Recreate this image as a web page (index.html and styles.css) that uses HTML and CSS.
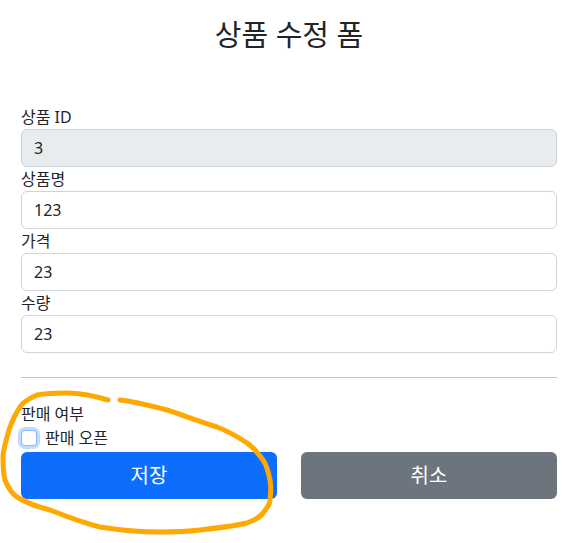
FILE: index.html
```html
<!DOCTYPE html>
<html lang="ko">
<head>
    <meta charset="UTF-8">
    <meta name="viewport" content="width=device-width, initial-scale=1.0">
    <title>상품 수정 폼</title>
    <link rel="stylesheet" href="styles.css">
</head>
<body>
    <div class="container">
        <div class="page-header">
            <h2>상품 수정 폼</h2>
        </div>

        <form class="item-form">
            <div class="field">
                <label for="id">상품 ID</label>
                <input type="text" id="id" class="input" value="3" readonly>
            </div>
            <div class="field">
                <label for="itemName">상품명</label>
                <input type="text" id="itemName" class="input" value="123">
            </div>
            <div class="field">
                <label for="price">가격</label>
                <input type="text" id="price" class="input" value="23">
            </div>
            <div class="field">
                <label for="quantity">수량</label>
                <input type="text" id="quantity" class="input" value="23">
            </div>

            <hr class="divider">

            <!-- 판매 여부 -->
            <div class="field">
                <div class="field-title">판매 여부</div>
                <div class="check">
                    <input type="checkbox" id="open" class="check-box">
                    <label for="open">판매 오픈</label>
                </div>
            </div>

            <div class="actions">
                <button type="submit" class="btn btn-primary">저장</button>
                <button type="button" class="btn btn-secondary">취소</button>
            </div>
        </form>
    </div>

    <!-- annotation drawn over the page -->
    <svg class="scribble" width="567" height="543" viewBox="0 0 567 543">
        <path d="M108 400 C 95 396, 80 393, 67 393 C 50 393, 42 394, 37 395 C 28 399, 22 403, 20 407 C 14 416, 11 424, 10 427 C 6 440, 3 450, 3 457 C 3 468, 4 476, 5 480 C 9 490, 14 495, 17 497 C 30 505, 42 508, 50 510 C 70 518, 88 524, 100 527 C 125 531, 145 532, 160 532 C 180 532, 192 531, 200 530 C 225 527, 240 525, 247 523 C 258 519, 261 516, 263 513 C 268 507, 270 503, 270 500 C 271 492, 271 485, 270 480 C 268 470, 266 464, 263 460 C 257 452, 252 446, 247 443 C 235 435, 225 430, 217 427 C 195 420, 180 414, 167 410 C 148 405, 132 401, 120 400"
              fill="none" stroke="#ffa800" stroke-width="5" stroke-linecap="round"/>
    </svg>
</body>
</html>
```

FILE: styles.css
```css
body {
    margin: 0;
    font-family: "Noto Sans", "Noto Sans CJK KR", sans-serif;
    font-size: 16px;
    line-height: 1.5;
    color: #212529;
    background-color: #fff;
}
.container {
    width: 536px;
    margin-left: 21px;
}
.page-header {
    padding: 17px 0 52px;
    text-align: center;
}
.page-header h2 {
    margin: 0;
    font-size: 29px;
    font-weight: 400;
    line-height: 36px;
}
.field label,
.field-title {
    display: block;
}
.input {
    display: block;
    box-sizing: border-box;
    width: 100%;
    height: 38px;
    padding: 6px 12px;
    font-family: inherit;
    font-size: 16px;
    line-height: 1.5;
    color: #212529;
    background-color: #fff;
    border: 1px solid #ced4da;
    border-radius: 6px;
}
.input[readonly] {
    background-color: #e9ecef;
}
.divider {
    margin: 24px 0;
    border: 0;
    border-top: 1px solid #c4c4c4;
}
.check {
    display: flex;
    align-items: center;
    gap: 8px;
    height: 24px;
    margin-bottom: 2px;
}
.check label {
    display: inline;
}
.check-box {
    appearance: none;
    width: 16px;
    height: 16px;
    margin: 0;
    border: 1px solid #86b7fe;
    border-radius: 4px;
    background-color: #fff;
    box-shadow: 0 0 0 3px rgba(13, 110, 253, 0.25);
}
.actions {
    display: grid;
    grid-template-columns: 1fr 1fr;
    gap: 24px;
}
.btn {
    height: 47px;
    padding: 8px 16px;
    font-family: inherit;
    font-size: 20px;
    line-height: 1.5;
    color: #fff;
    border: 1px solid transparent;
    border-radius: 6px;
}
.btn-primary {
    background-color: #0d6efd;
}
.btn-secondary {
    background-color: #6c757d;
}
.scribble {
    position: absolute;
    top: 0;
    left: 0;
    pointer-events: none;
}
```
